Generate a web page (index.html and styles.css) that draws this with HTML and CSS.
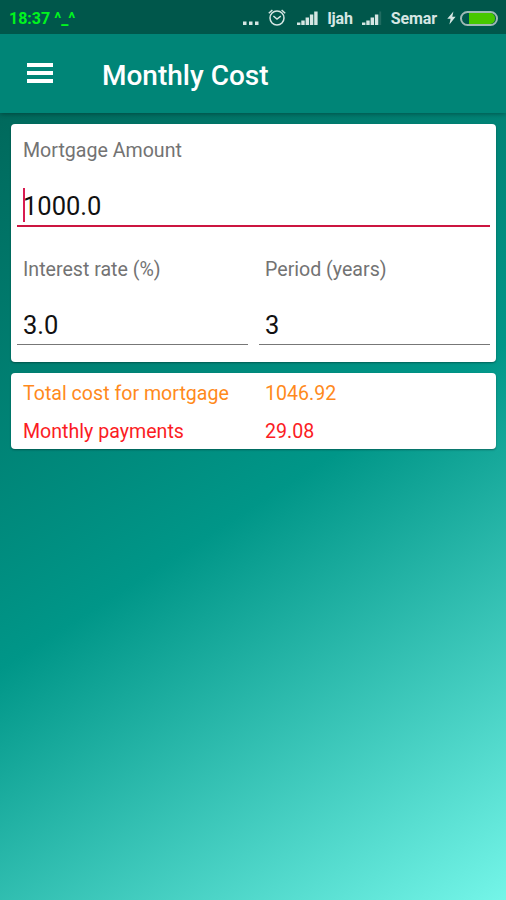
FILE: index.html
```html
<!DOCTYPE html>
<html lang="en">
<head>
  <meta charset="UTF-8" />
  <meta name="viewport" content="width=device-width, initial-scale=1" />
  <title>Monthly Cost</title>
  <link rel="stylesheet" href="styles.css">
</head>
<body>
  <div class="status-bar">
    <span class="clock">18:37 ^_^</span>
    <div class="status-icons">
      <svg class="dots" width="16" height="18" viewBox="0 0 16 18" fill="currentColor">
        <rect x="0" y="12.5" width="3.5" height="3.5" /><rect x="6" y="12.5" width="3.5" height="3.5" /><rect x="12" y="12.5" width="3.5" height="3.5" />
      </svg>
      <svg class="alarm" width="18" height="18" viewBox="0 0 18 18" fill="none" stroke="currentColor" stroke-width="1.5">
        <circle cx="9" cy="9" r="7" />
        <path d="M.8 4.2 4.4 1M17.2 4.2 13.6 1M5.4 7 9 10l3.8-2.8" />
      </svg>
      <svg class="signal" width="22" height="18" viewBox="0 0 22 18" fill="currentColor">
        <rect x="0" y="13.5" width="3.4" height="2.5" /><rect x="4.3" y="11.5" width="3.4" height="4.5" /><rect x="8.6" y="8.5" width="3.4" height="7.5" /><rect x="12.9" y="5.5" width="3.4" height="10.5" /><rect x="17.2" y="2.5" width="3.4" height="13.5" />
      </svg>
      <span class="carrier first">Ijah</span>
      <svg class="signal" width="22" height="18" viewBox="0 0 22 18" fill="currentColor">
        <rect x="0" y="13.5" width="3.4" height="2.5" /><rect x="4.3" y="11.5" width="3.4" height="4.5" /><rect x="8.6" y="8.5" width="3.4" height="7.5" /><rect x="12.9" y="5.5" width="3.4" height="10.5" /><rect x="17.2" y="2.5" width="2" height="13.5" opacity=".15" />
      </svg>
      <span class="carrier second">Semar</span>
      <svg class="bolt" width="9" height="14" viewBox="0 0 9 14" fill="currentColor">
        <path d="M6.4.5.3 7.8h3.3L2.4 13.5l6.2-7.7H5.3z" />
      </svg>
      <div class="battery"><div class="level"></div></div>
    </div>
  </div>

  <div class="toolbar">
    <button class="menu" aria-label="Menu"><i></i><i></i><i></i></button>
    <h1>Monthly Cost</h1>
  </div>

  <div class="content">
    <div class="card form">
      <div class="field">
        <label>Mortgage Amount</label>
        <div class="input focused"><span class="caret"></span>1000.0</div>
      </div>
      <div class="row">
        <div class="field">
          <label>Interest rate (%)</label>
          <div class="input">3.0</div>
        </div>
        <div class="field">
          <label>Period (years)</label>
          <div class="input">3</div>
        </div>
      </div>
    </div>

    <div class="card results">
      <div class="result total"><span>Total cost for mortgage</span><span>1046.92</span></div>
      <div class="result monthly"><span>Monthly payments</span><span>29.08</span></div>
    </div>
  </div>
</body>
</html>
```
FILE: styles.css
```css
* { box-sizing: border-box; }
body {
  font-family: Roboto, sans-serif;
  margin: 0;
  height: 100vh;
  display: flex;
  flex-direction: column;
  overflow: hidden;
}
.status-bar {
  height: 34px;
  flex: none;
  background: #00574b;
  color: #d5e6e3;
  display: flex;
  justify-content: space-between;
  align-items: center;
  padding: 2px 8px 0 9px;
  z-index: 2;
}
.clock {
  color: #00f51d;
  font-size: 16px;
  font-weight: 700;
}
.status-icons {
  display: flex;
  align-items: center;
}
.dots { margin-right: 9px; }
.alarm { margin-right: 11px; }
.carrier {
  font-size: 16px;
  font-weight: 700;
}
.first {
  margin: 0 9px 0 8px;
  letter-spacing: -0.2px;
}
.second {
  margin: 0 10px 0 7px;
  letter-spacing: -0.1px;
}
.bolt { margin-right: 4px; }
.battery {
  width: 38px;
  height: 15px;
  border: 2px solid #9fb9b5;
  border-radius: 8px;
  padding: 0 1px 0 7px;
}
.level {
  height: 100%;
  background: #47c800;
  border-radius: 0 5px 5px 0;
}
.toolbar {
  height: 79px;
  flex: none;
  background: #008577;
  color: white;
  display: flex;
  align-items: center;
  padding-left: 27px;
  z-index: 1;
  box-shadow: 0 1px 5px rgba(0,0,0,0.35);
}
.menu {
  width: 26px;
  padding: 0;
  border: none;
  background: none;
  display: flex;
  flex-direction: column;
  gap: 4px;
  margin-top: -1px;
}
.menu i {
  height: 4px;
  background: white;
}
h1 {
  margin: 5px 0 0 49px;
  font-size: 28px;
  line-height: 32px;
  font-weight: 500;
}
.content {
  flex: 1;
  padding: 11px 10px 0 11px;
  background: linear-gradient(147.3deg, #00695c, #009688 50%, #74f5e8);
}
.card {
  background: white;
  border-radius: 4px;
  box-shadow: 0 1px 2px rgba(0,0,0,0.35);
}
.form {
  height: 238px;
  padding: 13px 6px 0;
}
.row {
  display: grid;
  grid-template-columns: 1fr 1fr;
  gap: 11px;
  margin-top: 29px;
}
.field label {
  display: block;
  padding-left: 6px;
  font-size: 19.6px;
  line-height: 28px;
  color: #737373;
}
.input {
  position: relative;
  height: 61px;
  padding: 25px 6px 0;
  font-size: 25.5px;
  line-height: 32px;
  color: #111;
  border-bottom: 1px solid #777;
}
.input.focused {
  height: 62px;
  border-bottom: 2px solid #cc1540;
}
.caret {
  position: absolute;
  left: 6px;
  top: 23px;
  width: 2px;
  height: 34px;
  background: #d81b50;
}
.results {
  height: 76px;
  margin-top: 11px;
  padding: 2px 12px 0;
}
.result {
  display: grid;
  grid-template-columns: 242px 1fr;
  font-size: 19.6px;
  line-height: 38px;
}
.total { color: #ff8a1c; }
.monthly { color: #fb1c24; }
```
